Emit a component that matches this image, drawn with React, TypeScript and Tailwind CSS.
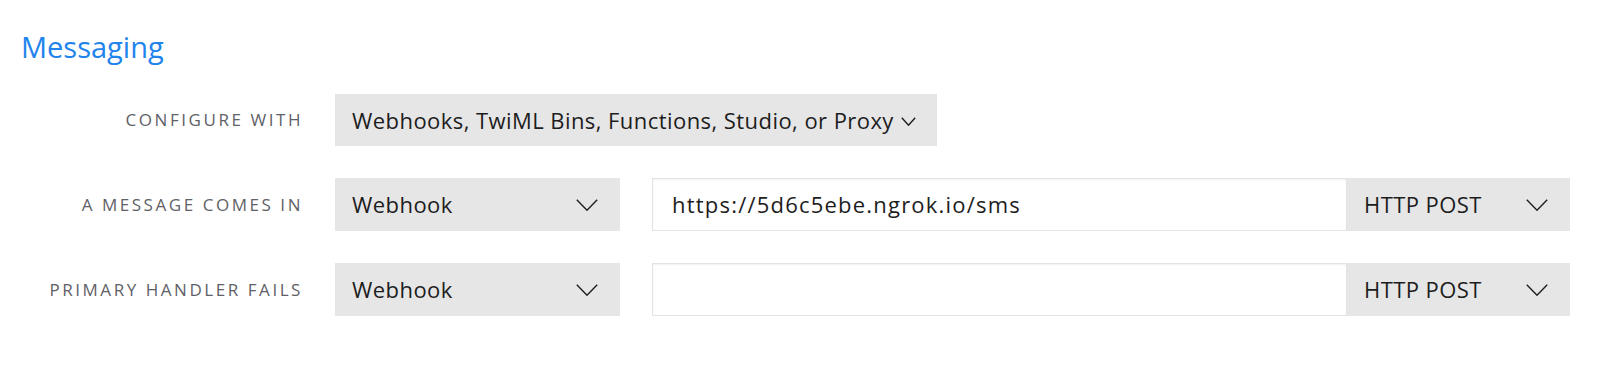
import React from 'react'

function Chevron({ w, h }: { w: number; h: number }) {
  return (
    <svg width={w} height={h} viewBox={`0 0 ${w} ${h}`} fill="none" className="shrink-0">
      <polyline points={`0.8,0.8 ${w / 2},${h - 0.8} ${w - 0.8},0.8`} stroke="#1b1b1b" strokeWidth="1.4" />
    </svg>
  )
}

function Label({ children }: { children: React.ReactNode }) {
  return (
    <div className="w-[303px] shrink-0 text-right text-[17px] tracking-[0.15em] uppercase text-[#5f6166]">
      {children}
    </div>
  )
}

function SelectBox({ value, width }: { value: string; width: string }) {
  return (
    <div className={`${width} h-[53px] shrink-0 bg-[#e6e6e6] flex items-center justify-between pl-[17px] pr-[22px] text-[22px] tracking-[0.02em] text-[#1d1d1d]`}>
      <span>{value}</span>
      <Chevron w={22} h={12} />
    </div>
  )
}

function EndpointRow({ label, url }: { label: string; url: string }) {
  return (
    <div className="flex items-center">
      <Label>{label}</Label>
      <div className="flex ml-[32px]">
        <SelectBox value="Webhook" width="w-[285px]" />
        <div className="ml-[32px] flex">
          <div className="w-[695px] h-[53px] bg-white border border-[#e3e3e3] shadow-[inset_0_1px_2px_rgba(0,0,0,0.06)] flex items-center pl-[19px] text-[22px] tracking-[0.055em] text-[#1d1d1d]">
            {url}
          </div>
          <SelectBox value="HTTP POST" width="w-[223px]" />
        </div>
      </div>
    </div>
  )
}

export default function App() {
  return (
    <div className="w-[1600px] h-[391px] bg-white font-['Open_Sans',sans-serif] pt-[29px]">
      <h2 className="pl-[21px] text-[29px] leading-[36px] text-[#2183ec]">Messaging</h2>
      <div className="mt-[29px] flex flex-col gap-[32px]">
        <div className="flex items-center">
          <Label>Configure with</Label>
          <div className="ml-[32px] w-[602px] h-[52px] bg-[#e6e6e6] flex items-center pl-[17px] text-[22px] tracking-[0.02em] text-[#1d1d1d]">
            <span className="whitespace-nowrap">Webhooks, TwiML Bins, Functions, Studio, or Proxy</span>
            <span className="ml-[7px] mt-[2px]">
              <Chevron w={15} h={9} />
            </span>
          </div>
        </div>
        <EndpointRow label="A message comes in" url="https://5d6c5ebe.ngrok.io/sms" />
        <EndpointRow label="Primary handler fails" url="" />
      </div>
    </div>
  )
}
